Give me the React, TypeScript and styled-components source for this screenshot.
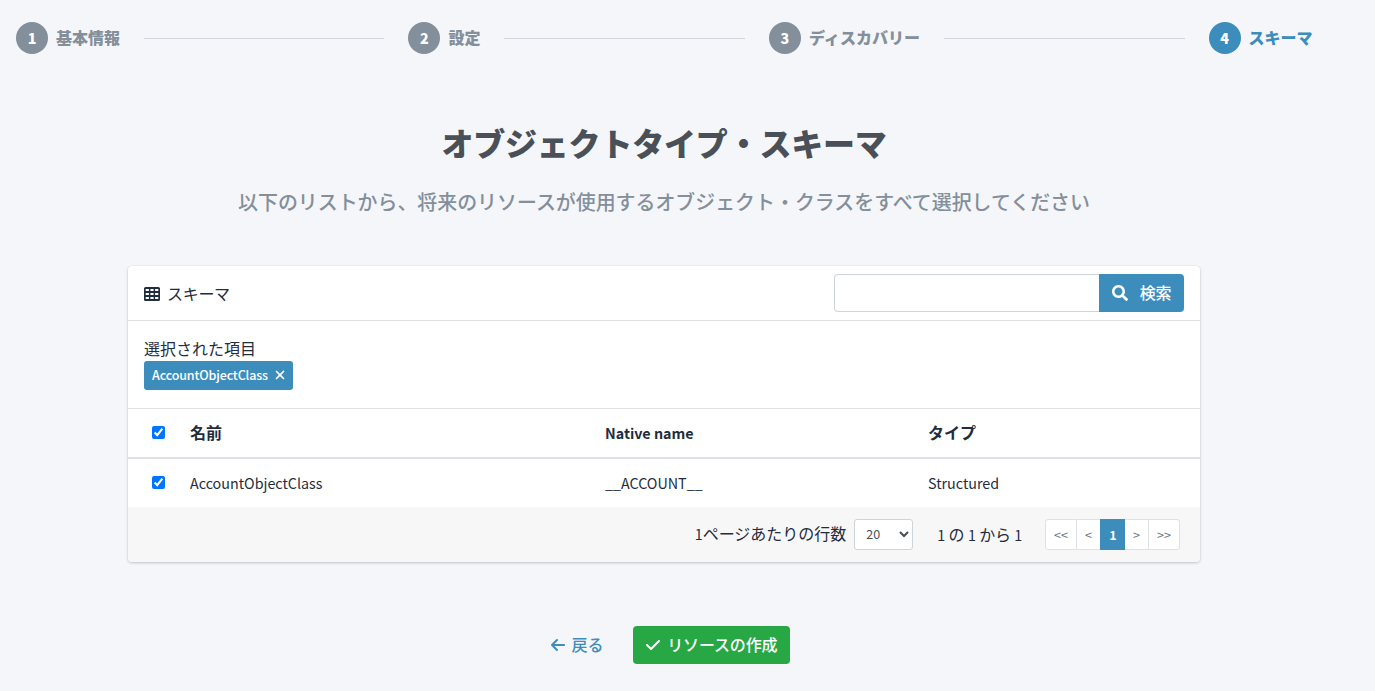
import React, { Fragment } from 'react';
import styled, { createGlobalStyle } from 'styled-components';
import { FaCheck, FaArrowLeft, FaXmark } from 'react-icons/fa6';
import { FaSearch } from 'react-icons/fa';

const GlobalStyle = createGlobalStyle`
  * { box-sizing: border-box; }
  body {
    margin: 0;
    background: #f4f6fa;
    color: #1f2d3d;
    font-family: "Noto Sans CJK JP", "Noto Sans", sans-serif;
    font-size: 16px;
    line-height: 24px;
    overflow: hidden;
  }
`;

const Page = styled.main`
  width: 1328px;
  height: 691px;
`;

const Stepper = styled.nav`
  display: flex;
  align-items: center;
  height: 76px;
  padding: 0 15.4px 0 16px;
`;

const Step = styled.div<{ $active?: boolean }>`
  display: flex;
  align-items: center;
  gap: 8px;
  color: ${(p) => (p.$active ? '#3c8dbc' : '#838f9b')};
  font-weight: 900;
  white-space: nowrap;
`;

const StepLabel = styled.span<{ $long?: boolean }>`
  padding-bottom: 2px;
  letter-spacing: ${(p) => (p.$long ? '0.05px' : 'normal')};
`;

const StepNumber = styled.span<{ $active?: boolean }>`
  display: flex;
  align-items: center;
  justify-content: center;
  width: 32px;
  height: 32px;
  border-radius: 50%;
  background: ${(p) => (p.$active ? '#3c8dbc' : '#838f9b')};
  color: #fff;
  font-size: 14.3px;
`;

const StepLine = styled.div`
  flex: 1;
  height: 1px;
  margin: 1px 24px 0;
  background: #d3d7dd;
`;

const Title = styled.h1`
  margin: 45px 0 0;
  font-size: 32px;
  line-height: 42px;
  font-weight: 900;
  letter-spacing: -0.2px;
  text-align: center;
  color: #495057;
`;

const Subtitle = styled.p`
  margin: 24px 0 0;
  font-size: 19.93px;
  line-height: 30px;
  font-weight: 500;
  text-align: center;
  color: #838f9b;
`;

const Card = styled.section`
  margin: 49px 128px 0;
  border-radius: 4px;
  background: #fff;
  box-shadow: 0 0 1px rgba(0, 0, 0, 0.125), 0 1px 3px rgba(0, 0, 0, 0.2);
  overflow: hidden;
`;

const CardHeader = styled.header`
  display: flex;
  align-items: center;
  justify-content: space-between;
  height: 55px;
  padding: 0 16px;
  border-bottom: 1px solid #dfdfdf;
`;

const CardTitle = styled.div`
  display: flex;
  align-items: center;
  gap: 7px;
`;

const GridGlyph = styled.svg`
  display: block;
  width: 16px;
  height: 14px;
  margin-top: 2px;
`;

const CardTitleText = styled.span`
  padding-bottom: 1px;
  letter-spacing: -0.3px;
`;

const SearchGroup = styled.form`
  display: flex;
  height: 38px;
`;

const SearchInput = styled.input`
  width: 265px;
  padding: 0 12px;
  border: 1px solid #ced4da;
  border-right: 0;
  border-radius: 4px 0 0 4px;
  background: #fff;
  font: inherit;
`;

const SearchButton = styled.button`
  display: flex;
  align-items: center;
  justify-content: center;
  gap: 12px;
  width: 85px;
  border: 0;
  padding: 0;
  border-radius: 0 4px 4px 0;
  background: #3c8dbc;
  color: #fff;
  font: inherit;
  font-weight: 500;
`;

const ButtonLabel = styled.span`
  padding-bottom: 2px;
  letter-spacing: -0.15px;
`;

const Selection = styled.div`
  height: 87px;
  padding: 15px 16px 0;
`;

const Tag = styled.span`
  display: flex;
  align-items: center;
  justify-content: space-between;
  width: 149px;
  height: 29px;
  margin-top: 1px;
  padding: 0 6px 1px 8px;
  border-radius: 3px;
  background: #3c8dbc;
  color: #fff;
  font-size: 12.5px;
  font-weight: 500;
  letter-spacing: -0.14px;
`;

const Table = styled.table`
  width: 100%;
  table-layout: fixed;
  border-collapse: separate;
  border-spacing: 0;
  text-align: left;
`;

const HeadCell = styled.th<{ $latin?: boolean }>`
  height: 51px;
  padding: ${(p) => (p.$latin ? '0 12px' : '0 12px 2px')};
  border-top: 1px solid #dee2e6;
  border-bottom: 2px solid #dee2e6;
  font-size: ${(p) => (p.$latin ? '14.3px' : '16px')};
  font-weight: 700;
`;

const Cell = styled.td`
  height: 48px;
  padding: 0 12px;
  font-size: 14.3px;
`;

const Checkbox = styled.input.attrs({ type: 'checkbox' })`
  display: block;
  width: 13px;
  height: 13px;
  margin: -1px 0 0 12px;
`;

const CardFooter = styled.footer`
  display: flex;
  align-items: center;
  justify-content: flex-end;
  height: 55px;
  padding: 0 20px;
  background: #f7f7f7;
`;

const PageSizeLabel = styled.span`
  padding-bottom: 2px;
`;

const PageSize = styled.select`
  width: 59px;
  height: 31px;
  margin: 0 24px 0 8px;
  padding: 0 0 2px 7px;
  border: 1px solid #ced4da;
  border-radius: 3px;
  background: #fff;
  color: #495057;
  font-family: inherit;
  font-size: 12.5px;
`;

const Range = styled.span`
  display: flex;
  align-items: baseline;
  gap: 3.5px;
  margin-right: 23px;
  letter-spacing: -0.2px;
`;

const Num = styled.span`
  font-size: 14.3px;
`;

const Pager = styled.div`
  display: flex;
  height: 31px;
`;

const PagerButton = styled.button<{ $w: number; $active?: boolean }>`
  width: ${(p) => p.$w}px;
  padding: 0 0 1px;
  border: 1px solid ${(p) => (p.$active ? '#3c8dbc' : '#dee2e6')};
  border-left-width: ${(p) => (p.$active ? 1 : 0)}px;
  border-right-width: ${(p) => (p.$active ? 0 : 1)}px;
  background: ${(p) => (p.$active ? '#3c8dbc' : '#fff')};
  color: ${(p) => (p.$active ? '#fff' : '#6c757d')};
  font-family: inherit;
  font-size: 12.5px;
  font-weight: ${(p) => (p.$active ? 700 : 400)};
  &:first-child { border-left-width: 1px; border-radius: 3px 0 0 3px; }
  &:nth-child(2) { border-right-width: 0; }
  &:last-child { border-radius: 0 3px 3px 0; }
`;

const Actions = styled.div`
  display: flex;
  align-items: center;
  justify-content: center;
  gap: 18px;
  margin-top: 64px;
`;

const ActionButton = styled.button<{ $primary?: boolean }>`
  display: flex;
  align-items: center;
  gap: 6px;
  height: 38px;
  padding: ${(p) => (p.$primary ? '0 13px 0 12px' : '0 12px')};
  border: 0;
  border-radius: 4px;
  background: ${(p) => (p.$primary ? '#28a745' : 'transparent')};
  color: ${(p) => (p.$primary ? '#fff' : '#3c8dbc')};
  font: inherit;
  font-weight: 500;
`;

const GridIcon = () => (
  <GridGlyph viewBox="0 0 16 14" fill="currentColor" fillRule="evenodd">
    <path d="M1.6 0h12.8a1.6 1.6 0 0 1 1.6 1.6v10.8a1.6 1.6 0 0 1-1.6 1.6H1.6a1.6 1.6 0 0 1-1.6-1.6V1.6a1.6 1.6 0 0 1 1.6-1.6z M1.7 2v2.1h3.2V2z M6.4 2v2.1h3.2V2z M11.1 2v2.1h3.2V2z M1.7 5.9v2.2h3.2V5.9z M6.4 5.9v2.2h3.2V5.9z M11.1 5.9v2.2h3.2V5.9z M1.7 9.9v2.1h3.2V9.9z M6.4 9.9v2.1h3.2V9.9z M11.1 9.9v2.1h3.2V9.9z" />
  </GridGlyph>
);

const steps = ['基本情報', '設定', 'ディスカバリー', 'スキーマ'];
const pages: { label: string; width: number; active?: boolean }[] = [
  { label: '<<', width: 32 },
  { label: '<', width: 23 },
  { label: '1', width: 25, active: true },
  { label: '>', width: 24 },
  { label: '>>', width: 31 },
];

export default function App() {
  return (
    <Page>
      <GlobalStyle />
      <Stepper>
        {steps.map((label, i) => (
          <Fragment key={label}>
            {i > 0 && <StepLine />}
            <Step $active={i === 3}>
              <StepNumber $active={i === 3}>{i + 1}</StepNumber>
              <StepLabel $long={label.length > 4}>{label}</StepLabel>
            </Step>
          </Fragment>
        ))}
      </Stepper>
      <Title>オブジェクトタイプ・スキーマ</Title>
      <Subtitle>以下のリストから、将来のリソースが使用するオブジェクト・クラスをすべて選択してください</Subtitle>
      <Card>
        <CardHeader>
          <CardTitle>
            <GridIcon />
            <CardTitleText>スキーマ</CardTitleText>
          </CardTitle>
          <SearchGroup>
            <SearchInput />
            <SearchButton type="button">
              <FaSearch size={16} />
              <ButtonLabel>検索</ButtonLabel>
            </SearchButton>
          </SearchGroup>
        </CardHeader>
        <Selection>
          選択された項目
          <Tag>
            AccountObjectClass
            <FaXmark size={14} />
          </Tag>
        </Selection>
        <Table>
          <colgroup>
            <col style={{ width: 50 }} />
            <col style={{ width: 415 }} />
            <col style={{ width: 323 }} />
            <col />
          </colgroup>
          <thead>
            <tr>
              <HeadCell $latin><Checkbox defaultChecked /></HeadCell>
              <HeadCell>名前</HeadCell>
              <HeadCell $latin>Native name</HeadCell>
              <HeadCell>タイプ</HeadCell>
            </tr>
          </thead>
          <tbody>
            <tr>
              <Cell><Checkbox defaultChecked /></Cell>
              <Cell>AccountObjectClass</Cell>
              <Cell>__ACCOUNT__</Cell>
              <Cell>Structured</Cell>
            </tr>
          </tbody>
        </Table>
        <CardFooter>
          <PageSizeLabel><Num>1</Num>ページあたりの行数</PageSizeLabel>
          <PageSize defaultValue="20">
            <option>20</option>
          </PageSize>
          <Range>
            <Num>1</Num>の<Num>1</Num>から<Num>1</Num>
          </Range>
          <Pager>
            {pages.map((p) => (
              <PagerButton key={p.label} $w={p.width} $active={p.active}>{p.label}</PagerButton>
            ))}
          </Pager>
        </CardFooter>
      </Card>
      <Actions>
        <ActionButton>
          <FaArrowLeft size={16} />
          <ButtonLabel>戻る</ButtonLabel>
        </ActionButton>
        <ActionButton $primary>
          <FaCheck size={16} />
          <ButtonLabel>リソースの作成</ButtonLabel>
        </ActionButton>
      </Actions>
    </Page>
  );
}
